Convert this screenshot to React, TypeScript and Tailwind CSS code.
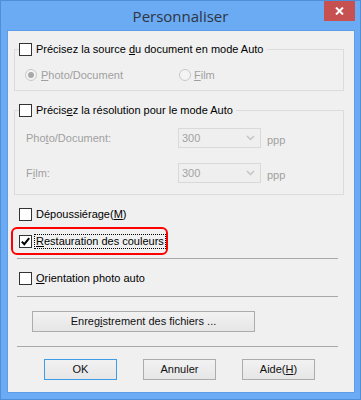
import React from 'react';

const font = { fontFamily: '"Liberation Sans", Arial, sans-serif' };

function CheckBox({ checked = false }: { checked?: boolean }) {
    return (
        <div className="w-[13px] h-[13px] shrink-0 border border-[#333333] bg-white flex items-center justify-center">
            {checked && (
                <svg width="9" height="9" viewBox="0 0 9 9">
                    <path d="M0.8 4.6 L3.3 7.2 L8.2 1.2" fill="none" stroke="#000" strokeWidth="2" />
                </svg>
            )}
        </div>
    );
}

function Radio({ checked = false }: { checked?: boolean }) {
    return (
        <div className="w-[12px] h-[12px] shrink-0 rounded-full border border-[#c8c8c8] bg-[#f4f4f4] flex items-center justify-center">
            {checked && <div className="w-[6px] h-[6px] rounded-full bg-[#a8a8a8]" />}
        </div>
    );
}

function Select() {
    return (
        <div className="w-[83px] h-[20px] border border-[#d9d9d9] bg-[#efefef] flex items-center justify-between pl-[3px] pr-[5px] text-[#a3a3a3]">
            <span>300</span>
            <svg width="9" height="6" viewBox="0 0 9 6">
                <path d="M1 1 L4.5 4.5 L8 1" fill="none" stroke="#c4c4c4" strokeWidth="1.5" />
            </svg>
        </div>
    );
}

function Separator() {
    return <div className="ml-[9px] w-[321px] h-px bg-[#a8a8a8]" />;
}

function Button({ children, focused = false, className = '' }: { children: React.ReactNode; focused?: boolean; className?: string }) {
    return (
        <div
            className={`h-[21px] flex items-center justify-center text-[#111] bg-gradient-to-b from-[#f2f2f2] to-[#e6e6e6] border ${focused ? 'border-[#3c9ce8]' : 'border-[#acacac]'} ${className}`}
        >
            {children}
        </div>
    );
}

export default function App() {
    return (
        <div className="w-[361px] h-[400px] bg-[#6aabf4] border border-[#4f8fd9] flex flex-col text-[11px] leading-none" style={font}>
            {/* Title bar */}
            <div className="h-[29px] relative flex items-center justify-center">
                <span className="text-[15px] text-[#2e3440] pt-[1px]" style={{ fontFamily: '"Open Sans", "Noto Sans", sans-serif' }}>
                    Personnaliser
                </span>
                <div className="absolute top-0 right-[5px] w-[31px] h-[20px] bg-[#c75050] flex items-center justify-center">
                    <svg width="9" height="8" viewBox="0 0 9 8">
                        <path d="M1 0.5 L8 7.5 M8 0.5 L1 7.5" stroke="#fff" strokeWidth="2" />
                    </svg>
                </div>
            </div>

            {/* Client area */}
            <div className="ml-[6px] w-[348px] h-[363px] border border-[#5c9de9] bg-[#f0f0f0] flex flex-col pt-[18px] text-[#000]">
                {/* Group 1 */}
                <div className="ml-[6px] w-[330px] border border-[#dcdcdc] flex flex-col pb-[8px]">
                    <div className="-mt-[8px] ml-[4px] h-[14px] w-fit bg-[#f0f0f0] pr-[3px] flex items-center gap-[4px]">
                        <CheckBox />
                        <span>Précisez la source <u>d</u>u document en mode Auto</span>
                    </div>
                    <div className="mt-[12px] h-[14px] flex items-center text-[#a0a0a0]">
                        <div className="ml-[10px] w-[154px] flex items-center gap-[4px]">
                            <Radio checked />
                            <span><u>P</u>hoto/Document</span>
                        </div>
                        <div className="flex items-center gap-[3px]">
                            <Radio />
                            <span><u>F</u>ilm</span>
                        </div>
                    </div>
                </div>

                {/* Group 2 */}
                <div className="mt-[19px] ml-[6px] w-[330px] border border-[#dcdcdc] flex flex-col pb-[11px]">
                    <div className="-mt-[8px] ml-[4px] h-[14px] w-fit bg-[#f0f0f0] pr-[3px] flex items-center gap-[4px]">
                        <CheckBox />
                        <span>Précis<u>e</u>z la résolution pour le mode Auto</span>
                    </div>
                    <div className="mt-[11px] flex items-center text-[#a0a0a0]">
                        <span className="ml-[11px] w-[152px]">Pho<u>t</u>o/Document:</span>
                        <Select />
                        <span className="ml-[6px] mt-[4px]">ppp</span>
                    </div>
                    <div className="mt-[15px] flex items-center text-[#a0a0a0]">
                        <span className="ml-[11px] w-[152px]">F<u>i</u>lm:</span>
                        <Select />
                        <span className="ml-[6px] mt-[4px]">ppp</span>
                    </div>
                </div>

                <div className="mt-[12px] ml-[11px] h-[14px] flex items-center gap-[4px]">
                    <CheckBox />
                    <span>Dépoussiérage(<u>M</u>)</span>
                </div>

                <div className="mt-[6px] ml-[3px] w-[157px] h-[28px] border-2 border-[#ff0000] rounded-[6px] flex items-center pl-[6px] gap-[2px]">
                    <CheckBox checked />
                    <span className="border border-dotted border-[#000] px-[1px] py-[1px]">
                        <u>R</u>estauration des couleurs
                    </span>
                </div>

                <div className="mt-[3px]">
                    <Separator />
                </div>

                <div className="mt-[12px] ml-[11px] h-[14px] flex items-center gap-[4px]">
                    <CheckBox />
                    <span><u>O</u>rientation photo auto</span>
                </div>

                <div className="mt-[11px]">
                    <Separator />
                </div>

                <Button className="mt-[14px] ml-[24px] w-[223px]">
                    Enreg<u>i</u>strement des fichiers ...
                </Button>

                <div className="mt-[14px]">
                    <Separator />
                </div>

                <div className="mt-[12px] ml-[36px] flex gap-[26px]">
                    <Button focused className="w-[73px]">OK</Button>
                    <Button className="w-[73px]">Annuler</Button>
                    <Button className="w-[73px]">Aide(<u>H</u>)</Button>
                </div>
            </div>
        </div>
    );
}
